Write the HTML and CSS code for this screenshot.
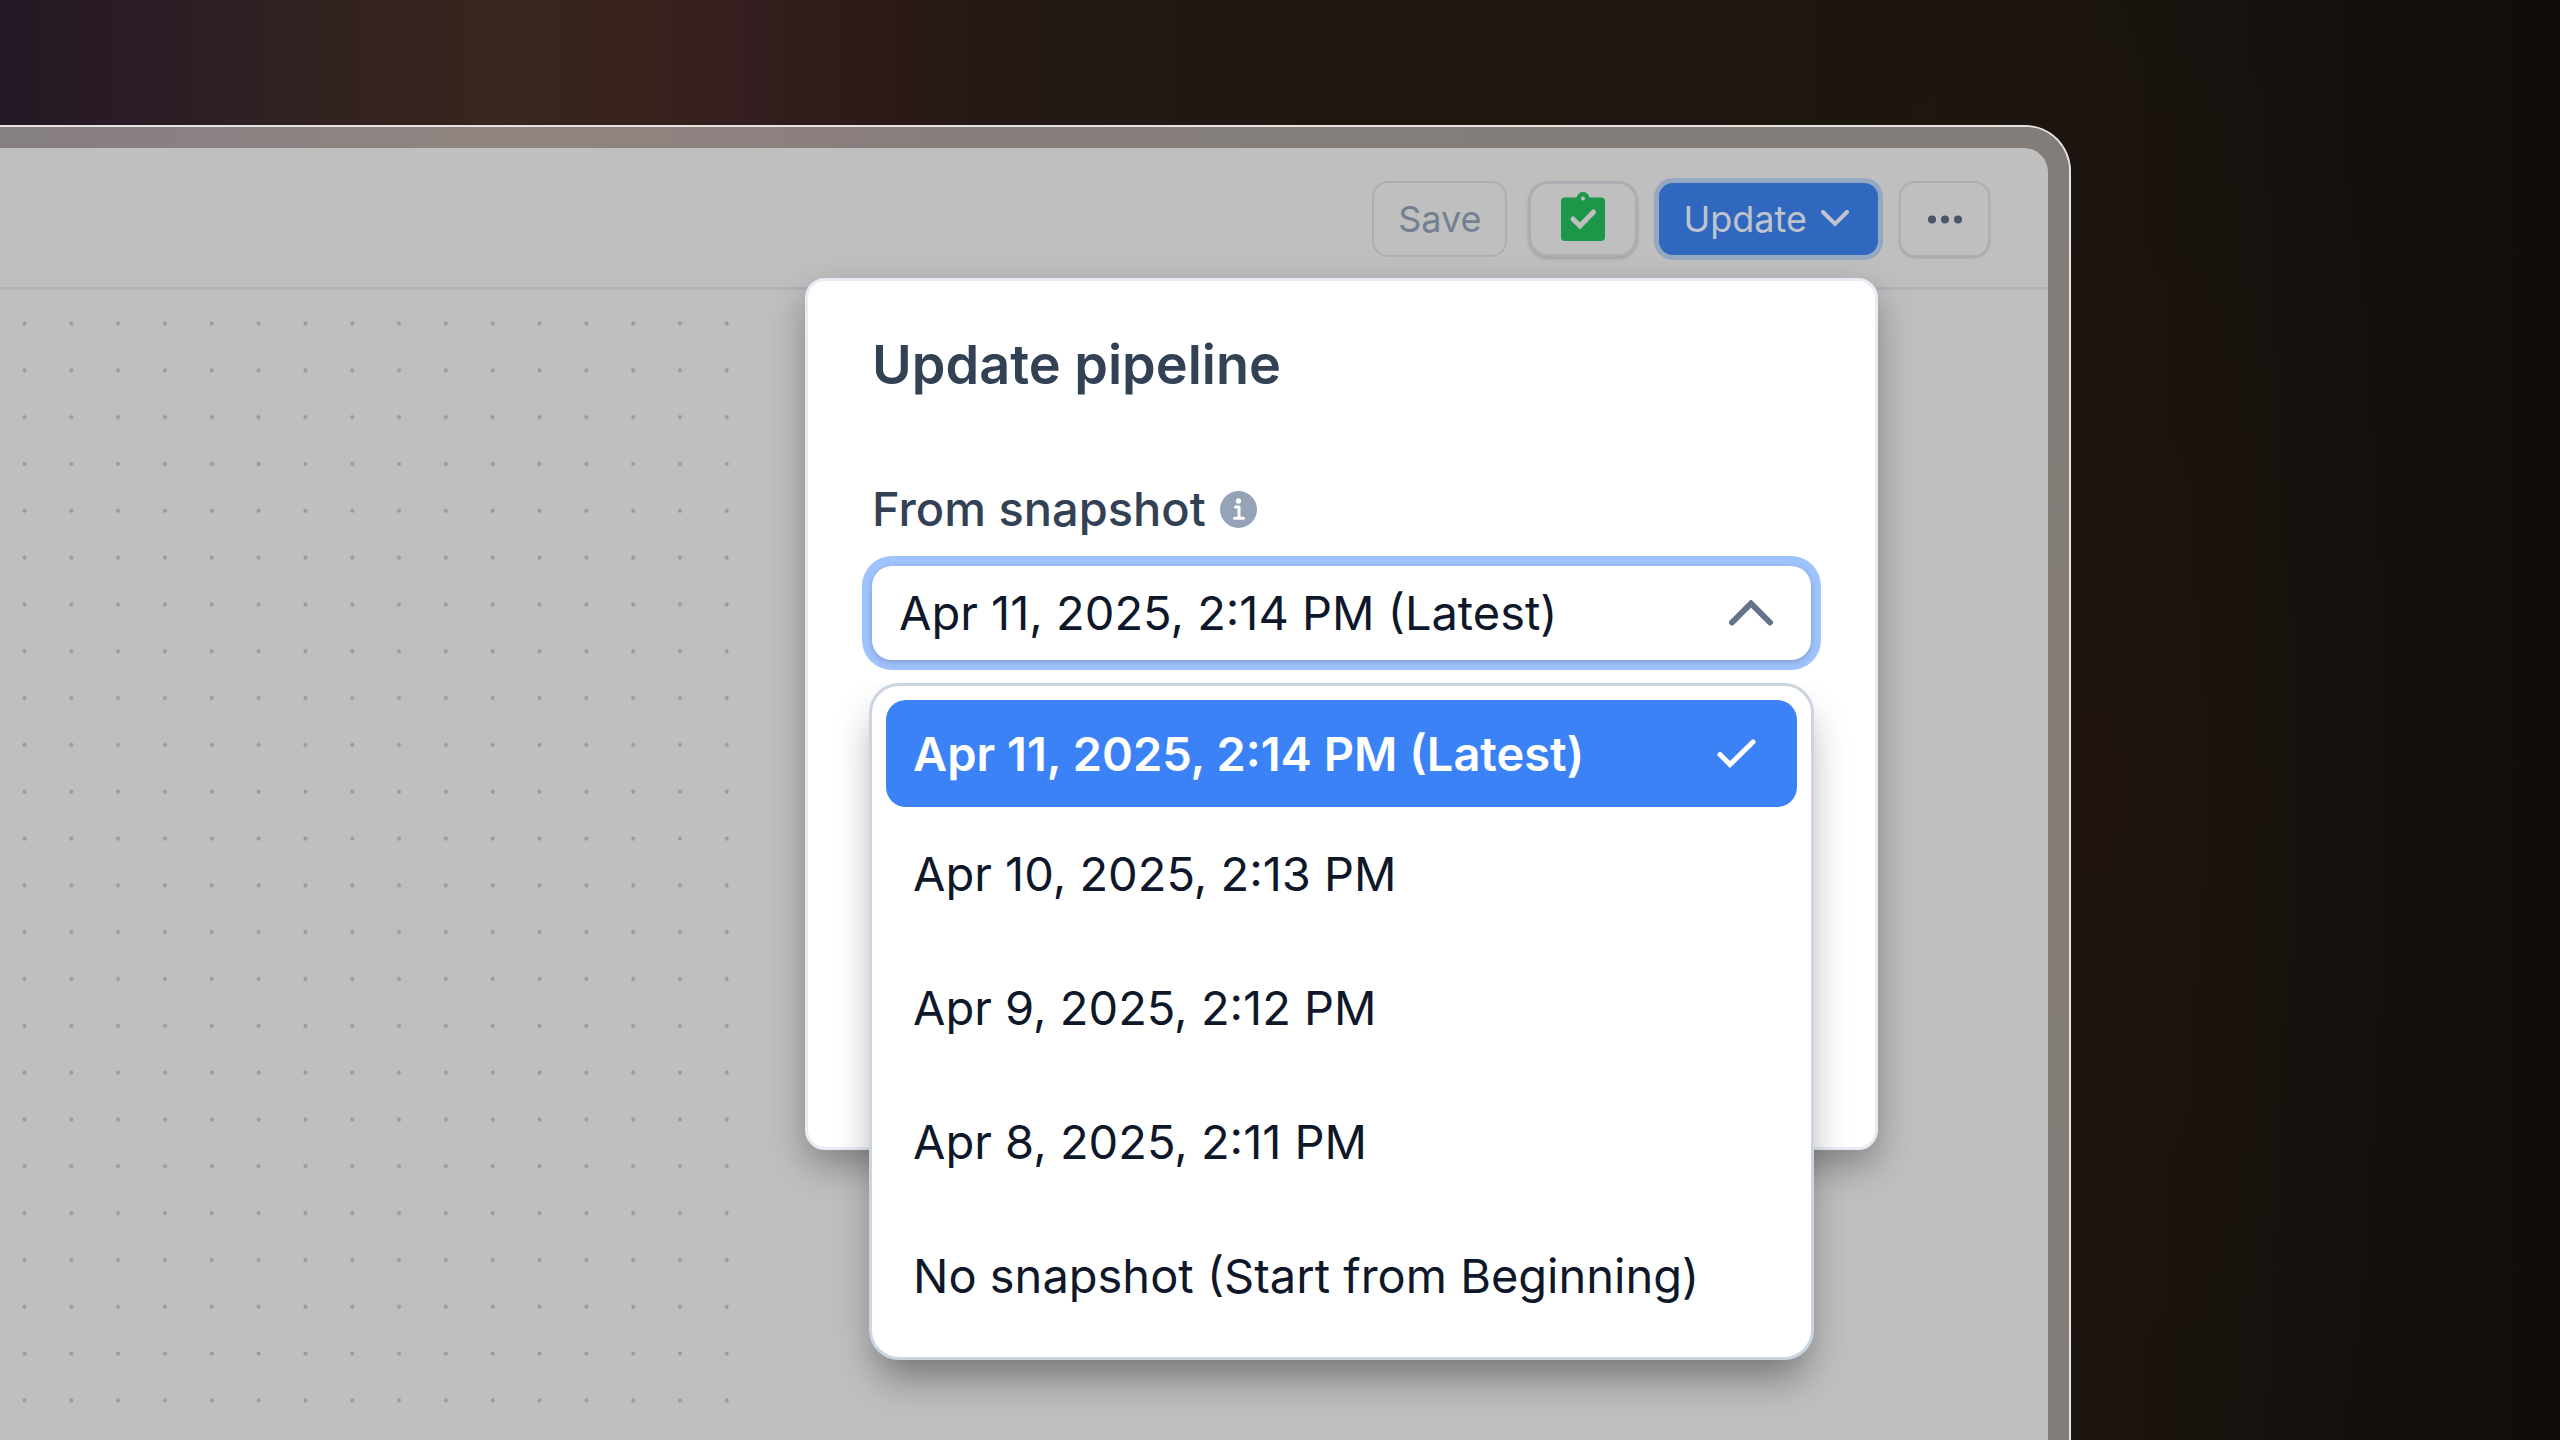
FILE: index.html
```
<!DOCTYPE html>
<html lang="en">
<head>
  <meta charset="UTF-8" />
  <title>Update pipeline</title>
  <link rel="stylesheet" href="styles.css">
</head>
<body>
  <div class="frame">
    <div class="app">
      <header class="toolbar">
        <button class="btn btn-save" disabled>Save</button>
        <button class="btn btn-check" aria-label="Checks passed">
          <svg width="44" height="50" viewBox="0 0 44 50">
            <path fill="#1c9648" d="M4 5.500H15.500C16.500 2 19 0 22 0s5.500 2 6.500 5.500H40a4 4 0 0 1 4 4V45a4 4 0 0 1-4 4H4a4 4 0 0 1-4-4V9.500a4 4 0 0 1 4-4z"/>
            <circle cx="22" cy="6.500" r="2" fill="#bfbfbf"/>
            <path d="M12 27l7 7 13.500-14" fill="none" stroke="#bfbfbf" stroke-width="5" stroke-linecap="round" stroke-linejoin="miter"/>
          </svg>
        </button>
        <div class="update">
          <button class="btn btn-update" aria-expanded="true">
            Update
            <svg width="28" height="18" viewBox="0 0 28 18">
              <path d="M2 2l12 12L26 2" fill="none" stroke="#bfc4cc" stroke-width="4" stroke-linecap="round"/>
            </svg>
          </button>

          <div class="popover">
            <h2>Update pipeline</h2>
            <div class="label-row">
              <label for="snapshot">From snapshot</label>
              <svg width="37" height="37" viewBox="0 0 37 37">
                <circle cx="18.500" cy="18.500" r="18.500" fill="#94a3b8"/>
                <circle cx="18.500" cy="10" r="2.700" fill="#fff"/>
                <path d="M15.500 16h3.500v11M14.500 27.300h9" fill="none" stroke="#fff" stroke-width="3" stroke-linecap="round" stroke-linejoin="round"/>
              </svg>
            </div>
            <div class="field">
              <select id="snapshot">
                <option>Apr 11, 2025, 2:14 PM (Latest)</option>
              </select>
              <svg class="chevron" width="44" height="26" viewBox="0 0 44 26">
                <path d="M3 22.500L22 3.500l19 19" fill="none" stroke="#64748b" stroke-width="6" stroke-linecap="round"/>
              </svg>

              <ul class="options" role="listbox" aria-label="From snapshot">
                <li class="selected" role="option" aria-selected="true">
                  Apr 11, 2025, 2:14 PM (Latest)
                  <svg width="39" height="29" viewBox="0 0 39 29">
                    <path d="M3 15.500l10 10L36 3" fill="none" stroke="#fff" stroke-width="5" stroke-linecap="round"/>
                  </svg>
                </li>
                <li role="option">Apr 10, 2025, 2:13 PM</li>
                <li role="option">Apr 9, 2025, 2:12 PM</li>
                <li role="option">Apr 8, 2025, 2:11 PM</li>
                <li role="option">No snapshot (Start from Beginning)</li>
              </ul>
            </div>
          </div>
        </div>
        <button class="btn btn-more" aria-label="More">
          <svg width="34" height="9" viewBox="0 0 34 9">
            <g fill="#4a5568">
              <circle cx="4" cy="4.500" r="4"/>
              <circle cx="17" cy="4.500" r="4"/>
              <circle cx="30" cy="4.500" r="4"/>
            </g>
          </svg>
        </button>
      </header>

      <main class="canvas">
        <svg class="grid" aria-hidden="true">
          <defs>
            <pattern id="dots" width="46.820" height="46.820" patternUnits="userSpaceOnUse">
              <circle cx="24.500" cy="33.500" r="2" fill="#9a9a9a"/>
            </pattern>
          </defs>
          <rect width="100%" height="100%" fill="url(#dots)"/>
        </svg>
      </main>
    </div>
  </div>
</body>
</html>
```
FILE: styles.css
```
* {
  box-sizing: border-box;
}

body {
  margin: 0;
  height: 100vh;
  overflow: hidden;
  display: flex;
  font-family: Inter, sans-serif;
  background:
    radial-gradient(ellipse 320px 1000px at 82% 55%, rgba(50, 22, 10, 0.25), transparent),
    linear-gradient(90deg, #231824 0%, #2a1c26 5%, #322220 13%, #39251f 19%, #38231e 25%, #341e1f 29%, #2c1a18 34%, #231813 40%, #201711 55%, #1d160f 75%, #19140f 83%, #14110d 91%, #100d0a 100%);
}

/* translucent bezel, runs off the left and bottom edges */
.frame {
  flex: 1;
  margin: 125px 489px 0 0;
  padding: 21px 21px 0 0;
  border: solid #e6e3e2;
  border-width: 2px 2px 0 0;
  border-radius: 0 46px 0 0;
  background: rgba(225, 220, 218, 0.52);
  background-clip: padding-box;
  display: flex;
}

.app {
  flex: 1;
  display: flex;
  flex-direction: column;
  background: #bfbfbf;
  border-radius: 0 24px 0 0;
}

.toolbar {
  display: flex;
  align-items: center;
  justify-content: flex-end;
  gap: 21px;
  padding: 33px 58px 30px 0;
  border-bottom: 3px solid #b0b4b8;
}

.btn {
  display: flex;
  align-items: center;
  justify-content: center;
  height: 76px;
  padding: 0 24px;
  border: 2px solid #adadb2;
  border-radius: 16px;
  background: #bfbfbf;
  font-family: inherit;
  font-size: 36px;
  line-height: 44px;
}

.btn-save {
  color: #748091;
}

.btn-check {
  width: 110px;
  border: 3px solid #adadb4;
  border-radius: 20px;
  box-shadow: 0 2px 3px rgba(0, 0, 0, 0.15);
}

.btn-check svg {
  margin-bottom: 4px;
}

.update {
  position: relative;
}

.btn-update {
  gap: 14px;
  height: 72px;
  padding: 0 29px 0 24px;
  border: none;
  border-radius: 14px;
  background: #3168bf;
  color: #bfc4cc;
  box-shadow: 0 0 0 5px #94a8c0;
}

.btn-more {
  width: 91px;
  box-shadow: 0 1px 2px rgba(0, 0, 0, 0.15);
}

.popover {
  position: absolute;
  top: 100%;
  right: 0;
  width: 1073px;
  margin-top: 23px;
  padding: 51px 64px 487px;
  border: 3px solid #e8ecf4;
  border-radius: 20px;
  background: #fff;
  box-shadow: 0 16px 36px rgba(0, 0, 0, 0.3);
}

.popover h2 {
  margin: 0 0 81px;
  font-size: 54px;
  line-height: 66px;
  font-weight: 600;
  color: #334155;
}

.label-row {
  display: flex;
  align-items: center;
  gap: 14px;
  margin-bottom: 27px;
  font-size: 47px;
  line-height: 60px;
  font-weight: 500;
  color: #334155;
}

.field {
  position: relative;
}

select {
  display: block;
  width: 100%;
  height: 94px;
  padding: 0 27px;
  border: none;
  border-radius: 20px;
  outline: none;
  appearance: none;
  background: #fff;
  box-shadow: 0 2px 6px rgba(0, 0, 0, 0.2), 0 0 0 10px #9fc3ff;
  font-family: inherit;
  font-size: 47px;
  line-height: 60px;
  color: #0f172a;
}

.chevron {
  position: absolute;
  top: 34px;
  right: 38px;
}

.options {
  position: absolute;
  top: 100%;
  left: -3px;
  right: -3px;
  margin: 23px 0 0;
  padding: 14px;
  border: 3px solid #cbd5e1;
  border-radius: 30px;
  background: #fff;
  list-style: none;
  /* negative spread keeps the shadow off the popover above */
  box-shadow: 0 24px 40px -8px rgba(0, 0, 0, 0.4);
  clip-path: inset(0 -60px -80px -60px);
}

.options li {
  display: flex;
  align-items: center;
  justify-content: space-between;
  height: 134px;
  padding: 0 41px 0 27px;
  font-size: 47px;
  line-height: 60px;
  color: #0f172a;
}

.options .selected {
  height: 107px;
  border-radius: 20px;
  background: #3b82f6;
  color: #fff;
  font-weight: 600;
}

.canvas {
  flex: 1;
  display: flex;
}

.grid {
  width: 752px;
  height: 100%;
}
```
